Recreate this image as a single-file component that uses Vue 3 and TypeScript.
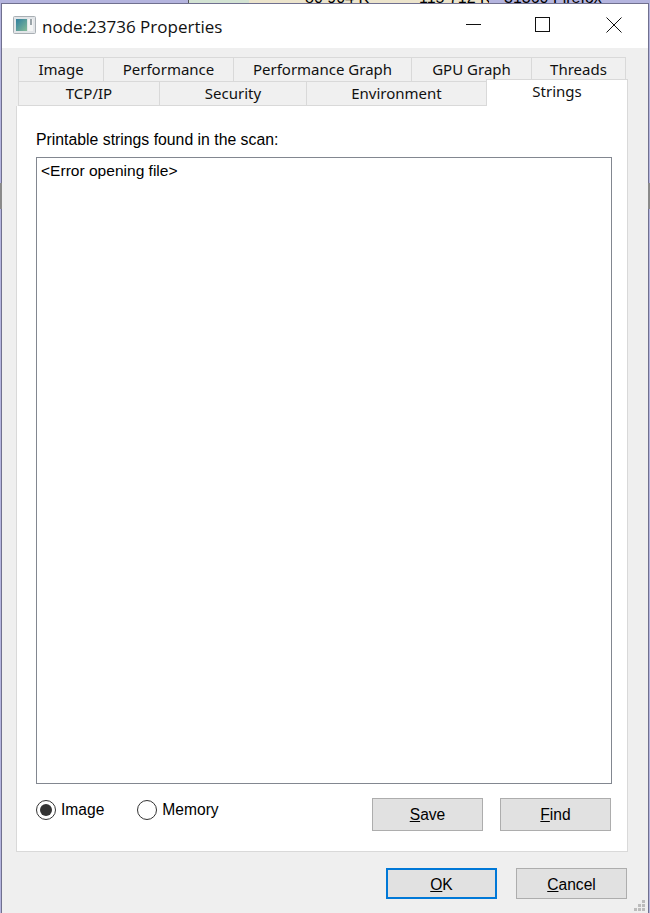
<script setup lang="ts">
const topTabs = [
  { label: 'Image', width: 86 },
  { label: 'Performance', width: 130 },
  { label: 'Performance Graph', width: 178 },
  { label: 'GPU Graph', width: 120 },
  { label: 'Threads', width: 94 },
]
const bottomTabs = [
  { label: 'TCP/IP', width: 142 },
  { label: 'Security', width: 147 },
  { label: 'Environment', width: 180 },
]
</script>

<template>
  <div class="desktop">
    <div class="behind">
      <span class="behind-a"></span>
      <span class="behind-b">
        <span class="bt1">80 904 K</span><span class="bt2">115 712 K</span>
      </span>
      <span class="behind-c"><span class="bt3">31360 Firefox</span></span>
    </div>
    <span class="edge edge-left"></span>
    <span class="edge edge-right"></span>
    <div class="window">
      <header class="titlebar">
        <svg class="app-icon" width="24" height="19" viewBox="0 0 24 19">
          <defs>
            <linearGradient id="pane" x1="0" y1="0" x2="1" y2="1">
              <stop offset="0" stop-color="#2f7f9f" />
              <stop offset="1" stop-color="#86bb98" />
            </linearGradient>
          </defs>
          <rect x="0.5" y="0.5" width="22" height="17" rx="1" fill="#e2e5e8" stroke="#a9afb4" />
          <rect x="3" y="3" width="11" height="12" fill="url(#pane)" />
          <rect x="15" y="3" width="5" height="12" fill="#f3f4f4" />
          <rect x="17" y="3" width="2" height="6" fill="#9aa4a9" />
        </svg>
        <span class="title">node:23736 Properties</span>
        <span class="spacer"></span>
        <svg class="cap" width="16" height="16" viewBox="0 0 16 16"><path d="M0 7.5H15" stroke="#111" fill="none" /></svg>
        <svg class="cap cap-max" width="16" height="16" viewBox="0 0 16 16"><rect x="0.5" y="0.5" width="14" height="14" stroke="#111" fill="none" /></svg>
        <svg class="cap cap-close" width="16" height="16" viewBox="0 0 16 16"><path d="M0.5 0.5L15.5 15.5M15.5 0.5L0.5 15.5" stroke="#111" fill="none" /></svg>
      </header>

      <div class="body">
        <div class="tabs">
          <div class="tab-row">
            <div v-for="t in topTabs" :key="t.label" class="tab" :style="{ width: t.width + 'px' }">{{ t.label }}</div>
          </div>
          <div class="tab-row second">
            <div v-for="t in bottomTabs" :key="t.label" class="tab" :style="{ width: t.width + 'px' }">{{ t.label }}</div>
            <div class="tab active">Strings</div>
          </div>
        </div>

        <section class="panel">
          <p class="caption">Printable strings found in the scan:</p>
          <div class="listbox">&lt;Error opening file&gt;</div>
          <div class="controls">
            <label class="radio"><span class="dot checked"></span>Image</label>
            <label class="radio second-radio"><span class="dot"></span>Memory</label>
            <span class="spacer"></span>
            <button class="btn"><u>S</u>ave</button>
            <button class="btn"><u>F</u>ind</button>
          </div>
        </section>

        <footer class="footer">
          <button class="btn wide default"><u>O</u>K</button>
          <button class="btn wide"><u>C</u>ancel</button>
        </footer>
        <svg class="grip" width="12" height="12" viewBox="0 0 12 12">
          <rect x="8" y="0" width="3" height="3" fill="#bcbcbc" />
          <rect x="4" y="4" width="3" height="3" fill="#bcbcbc" />
          <rect x="8" y="4" width="3" height="3" fill="#bcbcbc" />
          <rect x="0" y="8" width="3" height="3" fill="#bcbcbc" />
          <rect x="4" y="8" width="3" height="3" fill="#bcbcbc" />
          <rect x="8" y="8" width="3" height="3" fill="#bcbcbc" />
        </svg>
      </div>
    </div>
  </div>
</template>

<style>
html, body { margin: 0; background: #efefef; }
</style>

<style scoped>
.desktop {
  width: 650px;
  height: 913px;
  position: relative;
  overflow: hidden;
  background: #b4b4de;
  font-family: "Liberation Sans", Arial, sans-serif;
  color: #000;
}
.behind {
  height: 3px;
  display: flex;
  overflow: hidden;
}
.behind-a { width: 188px; background: #b4b4de; }
.behind-b {
  width: 301px;
  position: relative;
  border-left: 1px solid #555;
  box-sizing: border-box;
  background: linear-gradient(90deg, #d3e3d3 0, #d3e3d3 60px, #ece4cc 60px);
}
.behind-c { flex: 1; background: #b4b4de; position: relative; }
.bt1, .bt2, .bt3 { position: absolute; font-size: 16px; line-height: 18px; top: -11px; white-space: nowrap; }
.bt1 { left: 116px; }
.bt2 { left: 230px; }
.bt3 { left: 15px; }
.edge { position: absolute; top: 183px; height: 26px; width: 2px; background: #8a8a8a; z-index: 2; }
.edge-left { left: 0; }
.edge-right { right: 0; }
.window {
  box-sizing: border-box;
  height: 910px;
  margin: 0 1px;
  border-left: 1px solid #70708f;
  border-right: 1px solid #70708f;
  border-top: 1px solid #70708f;
  background: #efefef;
  display: flex;
  flex-direction: column;
}
.titlebar {
  box-sizing: border-box;
  height: 44px;
  background: #fff;
  display: flex;
  align-items: center;
  padding: 0 26px 2px 11px;
  flex: none;
}
.title {
  font-family: "Open Sans", "Noto Sans", sans-serif;
  font-size: 17px;
  margin: 2px 0 0 5px;
  color: #111;
  white-space: nowrap;
}
.spacer { flex: 1; }
.cap-max { margin-left: 53px; }
.cap-close { margin-left: 55px; }
.body { flex: 1; position: relative; padding: 9px 20px 0 14px; display: flex; flex-direction: column; }
.tabs { flex: none; }
.tab-row { display: flex; height: 24px; padding-left: 2px; }
.tab {
  box-sizing: border-box;
  height: 25px;
  border: 1px solid #d9d9d9;
  border-left-width: 0;
  background: #f0f0f0;
  font-family: "Noto Sans", sans-serif;
  font-size: 15px;
  line-height: 23px;
  text-align: center;
  color: #111;
}
.tab:first-child { border-left-width: 1px; }
.tab.active {
  background: #fff;
  width: 142px;
  height: 27px;
  margin-top: -2px;
  margin-left: -1px;
  border-bottom: 0;
  border-left-width: 1px;
  line-height: 23px;
  position: relative;
  z-index: 1;
}
.panel {
  box-sizing: border-box;
  height: 746px;
  margin-top: 1px;
  background: #fff;
  border: 1px solid #d9d9d9;
  border-top: 0;
  padding: 25px 15px 0 19px;
  width: 612px;
}
.caption { margin: 0; font-size: 15.8px; line-height: 18px; }
.listbox {
  box-sizing: border-box;
  height: 627px;
  margin-top: 8px;
  border: 1px solid #828790;
  padding: 4px;
  font-size: 15.55px;
  line-height: 18px;
}
.controls { display: flex; align-items: flex-start; margin-top: 14px; padding-right: 1px; }
.radio { display: flex; align-items: center; font-size: 15.6px; height: 22px; margin-top: 1px; }
.second-radio { margin-left: 33px; }
.dot {
  box-sizing: border-box;
  width: 20px;
  height: 20px;
  border: 1px solid #333;
  border-radius: 50%;
  margin-right: 5px;
  position: relative;
  background: #fff;
}
.dot.checked::after {
  content: "";
  position: absolute;
  inset: 3px;
  background: #333;
  border-radius: 50%;
}
.btn {
  box-sizing: border-box;
  width: 111px;
  height: 33px;
  background: #e1e1e1;
  border: 1px solid #adadad;
  font-family: "Liberation Sans", Arial, sans-serif;
  font-size: 15.6px;
  color: #000;
  padding: 1px 0 0;
  margin-left: 17px;
}
.footer { display: flex; justify-content: flex-end; margin-top: 16px; padding-right: 1px; }
.btn.wide { height: 31px; margin-left: 19px; padding: 2px 0 0; }
.btn.default { border: 2px solid #0078d7; }
.grip { position: absolute; right: 2px; bottom: 1px; }
</style>
